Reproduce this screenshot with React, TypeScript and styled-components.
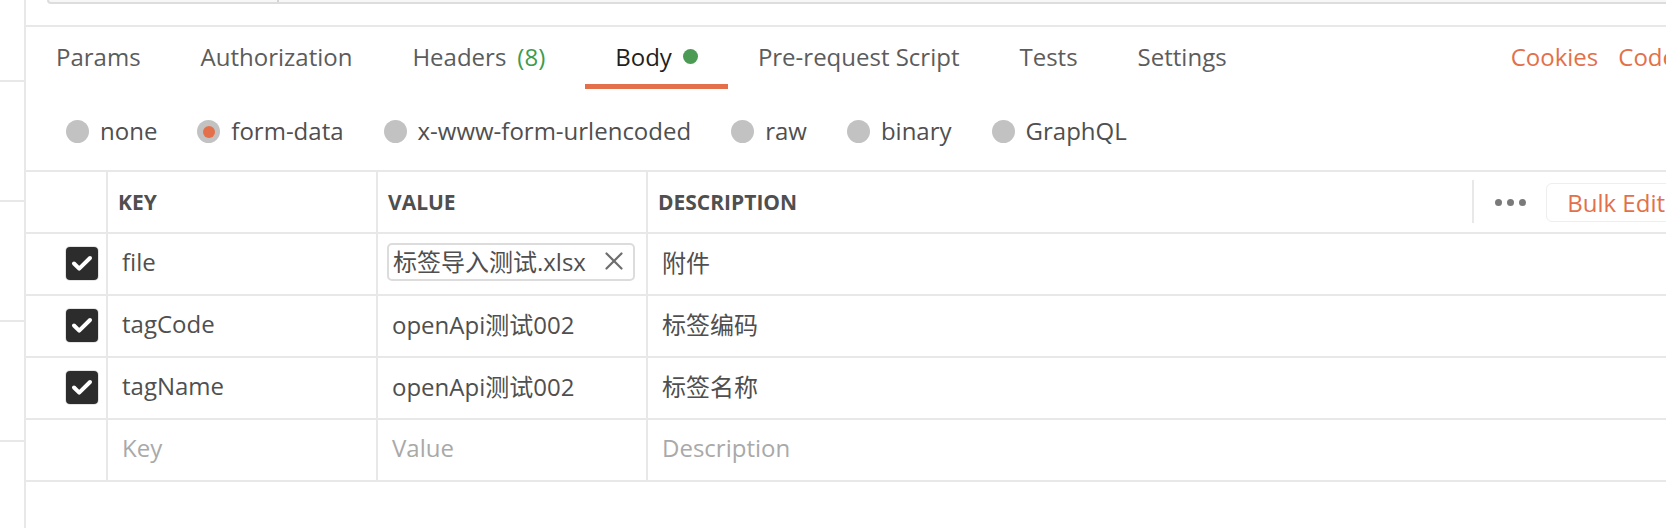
import React from "react";
import styled, { createGlobalStyle } from "styled-components";

const ORANGE = "#e3704a";
const LINE = "#e8e8e8";
const FONT = `"Open Sans", "Noto Sans CJK SC", sans-serif`;

const GlobalStyle = createGlobalStyle`
  html, body { margin: 0; padding: 0; background: #ffffff; overflow: hidden; }
  body { font-family: ${FONT}; }
  * { box-sizing: border-box; }
`;

const Page = styled.div`
  display: flex;
  width: 1700px;
  height: 528px;
  background: #ffffff;
`;

const Sidebar = styled.div`
  flex: none;
  width: 26px;
  border-right: 2px solid ${LINE};
  display: flex;
  flex-direction: column;
  padding-top: 80px;
  overflow: hidden;
`;

const SidebarItem = styled.div`
  flex: none;
  height: 120px;
  border-top: 2px solid ${LINE};
`;

const Main = styled.div`
  flex: 1;
  display: flex;
  flex-direction: column;
  min-width: 0;
`;

const TopSection = styled.div`
  flex: none;
  height: 27px;
  border-bottom: 2px solid ${LINE};
`;

const UrlBarEdge = styled.div`
  margin-left: 21px;
  height: 4px;
  border: 2px solid #dddddd;
  border-top: none;
  border-bottom-left-radius: 6px;
  background: #f7f7f7;
  display: flex;
`;

const UrlMethodPart = styled.div`
  width: 230px;
  border-right: 2px solid #d4d4d4;
`;

const TabsBar = styled.div`
  flex: none;
  display: flex;
  height: 62px;
`;

const Tab = styled.div<{ $active?: boolean; $extra?: boolean }>`
  display: flex;
  align-items: center;
  gap: 11px;
  padding: 3px ${(p) => (p.$extra ? "40px" : "30px")} 1px 30px;
  border-bottom: 5px solid ${(p) => (p.$active ? ORANGE : "transparent")};
  font-size: 24px;
  color: ${(p) => (p.$active ? "#1f1f1f" : "#5c5c5c")};
  white-space: nowrap;
`;

const Count = styled.span`
  color: #3d9b4f;
`;

const Dot = styled.span`
  width: 15px;
  height: 15px;
  border-radius: 50%;
  background: #4c9b55;
`;

const TabLinks = styled.div`
  margin-left: auto;
  display: flex;
  align-items: center;
  gap: 20px;
  padding: 0 24px 4px 0;
  font-size: 24px;
  color: ${ORANGE};
  white-space: nowrap;
`;

const RadioRow = styled.div`
  flex: none;
  display: flex;
  align-items: center;
  gap: 40px;
  height: 81px;
  padding: 2px 0 0 40px;
`;

const RadioItem = styled.label`
  display: flex;
  align-items: center;
  gap: 11px;
  font-size: 24px;
  color: #4f4f4f;
  white-space: nowrap;
`;

const RadioCircle = styled.span<{ $checked?: boolean }>`
  width: 23px;
  height: 23px;
  border-radius: 50%;
  background: #c2c2c2;
  display: flex;
  align-items: center;
  justify-content: center;
  margin-top: 2px;
  &::after {
    content: "";
    width: 12px;
    height: 12px;
    border-radius: 50%;
    background: ${(p) => (p.$checked ? ORANGE : "transparent")};
  }
`;

const Table = styled.div`
  flex: none;
  border-top: 2px solid ${LINE};
`;

const Row = styled.div`
  display: grid;
  grid-template-columns: 82px 270px 270px 1fr;
  height: 62px;
  border-bottom: 2px solid ${LINE};
`;

const Cell = styled.div<{ $head?: boolean; $placeholder?: boolean }>`
  display: flex;
  align-items: center;
  min-width: 0;
  border-right: 2px solid ${LINE};
  padding-left: ${(p) => (p.$head ? "10px" : "14px")};
  padding-bottom: ${(p) => (p.$head ? "0" : "5px")};
  font-size: ${(p) => (p.$head ? "21px" : "24px")};
  font-weight: ${(p) => (p.$head ? 700 : 400)};
  color: ${(p) => (p.$placeholder ? "#a9a9a9" : "#4f4f4f")};
  white-space: nowrap;
  &:last-child {
    border-right: none;
  }
`;

const CheckCell = styled.div`
  display: flex;
  align-items: center;
  justify-content: flex-end;
  padding: 0 8px 2px 0;
  border-right: 2px solid ${LINE};
`;

const Checkbox = styled.span`
  width: 32px;
  height: 33px;
  border-radius: 4px;
  background: #2c2c2c;
  box-shadow: 0 0 0 1px #e4e4e4;
  display: flex;
  align-items: center;
  justify-content: center;
`;

const FileChip = styled.div`
  margin-left: -5px;
  margin-top: 1px;
  width: 248px;
  height: 38px;
  border: 2px solid #dcdcdc;
  border-radius: 5px;
  display: flex;
  align-items: center;
  justify-content: space-between;
  padding: 0 10px 3px 4px;
  font-size: 24px;
  color: #4f4f4f;
`;

const HeadActions = styled.div`
  margin-left: auto;
  align-self: stretch;
  display: flex;
  align-items: center;
`;

const ActionDivider = styled.span`
  width: 2px;
  height: 43px;
  margin-top: -1px;
  background: ${LINE};
`;

const DotsButton = styled.span`
  width: 72px;
  display: flex;
  justify-content: center;
  gap: 5px;
  & > i {
    width: 7px;
    height: 7px;
    border-radius: 50%;
    background: #7a7a7a;
  }
`;

const BulkEdit = styled.span`
  height: 39px;
  margin-right: 14px;
  padding: 0 20px;
  border: 1px solid #eeeeee;
  border-radius: 6px;
  display: flex;
  align-items: center;
  font-size: 24px;
  font-weight: 400;
  color: ${ORANGE};
`;

const CheckIcon = () => (
  <svg width="26" height="26" viewBox="0 0 26 26" fill="none">
    <path d="M5 13.5l5.2 5.2L21 8" stroke="#ffffff" strokeWidth="4" strokeLinecap="round" strokeLinejoin="round" />
  </svg>
);

const CloseIcon = () => (
  <svg width="18" height="18" viewBox="0 0 18 18" fill="none">
    <path d="M1.5 1.5l15 15M16.5 1.5l-15 15" stroke="#6e6e6e" strokeWidth="2.2" strokeLinecap="round" />
  </svg>
);

const tabs = [
  { label: "Params" },
  { label: "Authorization" },
  { label: "Headers", count: "(8)" },
  { label: "Body", active: true, dot: true },
  { label: "Pre-request Script" },
  { label: "Tests" },
  { label: "Settings" },
];

const radios = ["none", "form-data", "x-www-form-urlencoded", "raw", "binary", "GraphQL"];

const rows = [
  { key: "tagCode", value: "openApi测试002", desc: "标签编码" },
  { key: "tagName", value: "openApi测试002", desc: "标签名称" },
];

export default function App() {
  return (
    <>
      <GlobalStyle />
      <Page>
        <Sidebar>
          <SidebarItem />
          <SidebarItem />
          <SidebarItem />
          <SidebarItem />
        </Sidebar>
        <Main>
          <TopSection>
            <UrlBarEdge>
              <UrlMethodPart />
            </UrlBarEdge>
          </TopSection>
          <TabsBar>
            {tabs.map((t) => (
              <Tab key={t.label} $active={t.active} $extra={!!t.count}>
                <span>{t.label}</span>
                {t.count && <Count>{t.count}</Count>}
                {t.dot && <Dot />}
              </Tab>
            ))}
            <TabLinks>
              <span>Cookies</span>
              <span>Code</span>
            </TabLinks>
          </TabsBar>
          <RadioRow>
            {radios.map((r) => (
              <RadioItem key={r}>
                <RadioCircle $checked={r === "form-data"} />
                {r}
              </RadioItem>
            ))}
          </RadioRow>
          <Table>
            <Row>
              <CheckCell />
              <Cell $head>KEY</Cell>
              <Cell $head>VALUE</Cell>
              <Cell $head>
                DESCRIPTION
                <HeadActions>
                  <ActionDivider />
                  <DotsButton>
                    <i />
                    <i />
                    <i />
                  </DotsButton>
                  <BulkEdit>Bulk Edit</BulkEdit>
                </HeadActions>
              </Cell>
            </Row>
            <Row>
              <CheckCell>
                <Checkbox>
                  <CheckIcon />
                </Checkbox>
              </CheckCell>
              <Cell>file</Cell>
              <Cell>
                <FileChip>
                  <span>标签导入测试.xlsx</span>
                  <CloseIcon />
                </FileChip>
              </Cell>
              <Cell>附件</Cell>
            </Row>
            {rows.map((r) => (
              <Row key={r.key}>
                <CheckCell>
                  <Checkbox>
                    <CheckIcon />
                  </Checkbox>
                </CheckCell>
                <Cell>{r.key}</Cell>
                <Cell>{r.value}</Cell>
                <Cell>{r.desc}</Cell>
              </Row>
            ))}
            <Row>
              <CheckCell />
              <Cell $placeholder>Key</Cell>
              <Cell $placeholder>Value</Cell>
              <Cell $placeholder>Description</Cell>
            </Row>
          </Table>
        </Main>
      </Page>
    </>
  );
}
